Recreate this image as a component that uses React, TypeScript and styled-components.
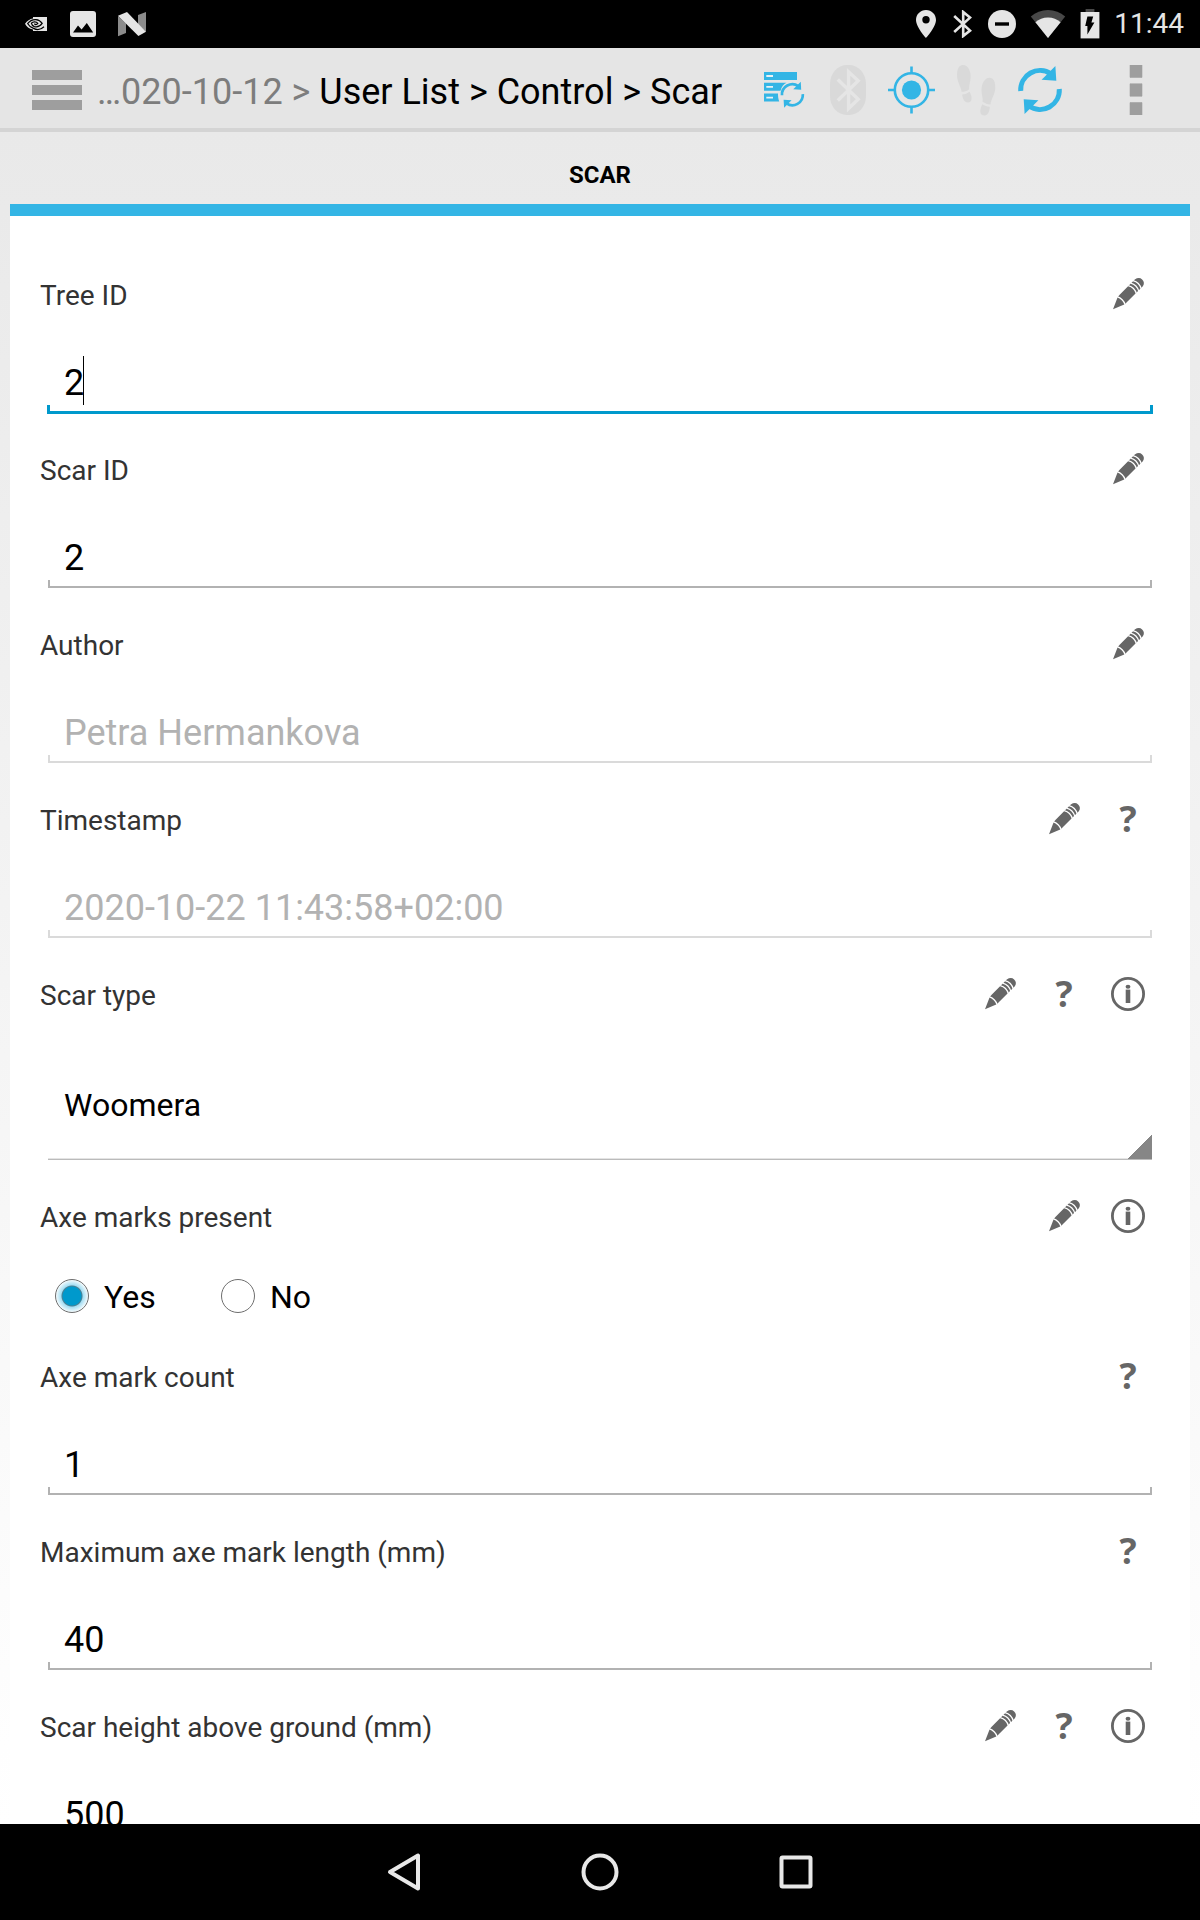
import React from "react";
import styled, { createGlobalStyle, css } from "styled-components";

const blue = "#33b5e5";
const focusBlue = "#0099cc";
const statusInk = "#e5e5e5";
const iconInk = "#666666";

const GlobalStyle = createGlobalStyle`
  *, *::before, *::after { box-sizing: border-box; }
  body { margin: 0; background: #000; font-family: Roboto, "Noto Sans", sans-serif; }
  button, input, select { font-family: inherit; margin: 0; }
`;

const Screen = styled.div`
  display: flex;
  flex-direction: column;
  height: 100vh;
  overflow: hidden;
  color: #000;
`;

/* ---------- Status bar ---------- */

const StatusBar = styled.div`
  display: flex;
  flex: none;
  align-items: center;
  justify-content: space-between;
  height: 48px;
  padding: 0 16px 0 24px;
  background: #000;
`;

const StatusGroup = styled.div<{ $gap: number }>`
  display: flex;
  align-items: center;
  gap: ${(p) => p.$gap}px;
`;

const Clock = styled.time`
  color: ${statusInk};
  font-size: 28px;
  line-height: 48px;
`;

/* ---------- App bar ---------- */

const AppBar = styled.header`
  display: flex;
  flex: none;
  align-items: center;
  height: 84px;
  padding-left: 32px;
  background: #e5e5e5;
  border-bottom: 4px solid #d4d4d4;
`;

const plainButton = css`
  display: flex;
  align-items: center;
  justify-content: center;
  padding: 0;
  border: 0;
  background: none;
`;

const MenuButton = styled.button`
  ${plainButton}
  flex: none;
  flex-direction: column;
  gap: 5px;
  width: 50px;
  height: 80px;
  padding-top: 4px;
`;

const MenuLine = styled.span`
  width: 50px;
  height: 10px;
  background: #9e9e9e;
`;

const Breadcrumb = styled.nav`
  flex: 1;
  min-width: 0;
  padding: 8px 0 0 15px;
  overflow: hidden;
  white-space: nowrap;
  font-size: 36px;
  line-height: 42px;
`;

const Crumb = styled.a<{ $muted?: boolean }>`
  color: ${(p) => (p.$muted ? "#7d7d7d" : "#000")};
  text-decoration: none;
`;

const Separator = styled.span<{ $muted?: boolean }>`
  color: ${(p) => (p.$muted ? "#7d7d7d" : "#000")};
`;

const Actions = styled.div`
  display: flex;
  flex: none;
  padding-top: 4px;
`;

const ToolButton = styled.button<{ $wide?: boolean }>`
  ${plainButton}
  width: ${(p) => (p.$wide ? 128 : 64)}px;
  height: 64px;
`;

/* ---------- Form ---------- */

const Content = styled.main`
  display: flex;
  flex: 1;
  flex-direction: column;
  min-height: 0;
  padding: 0 10px;
  overflow: hidden;
  background: linear-gradient(#e9e9e9, #ffffff);
`;

const Tabs = styled.div`
  display: flex;
  flex: none;
  height: 84px;
  border-bottom: 12px solid ${blue};
`;

const Tab = styled.button`
  ${plainButton}
  flex: 1;
  padding-top: 14px;
  color: #000;
  font-size: 24px;
  font-weight: 700;
  line-height: 28px;
`;

const Form = styled.form`
  flex: 1;
  min-height: 0;
  padding: 46px 30px 0;
  overflow: hidden;
  background: #fff;
`;

const FieldBlock = styled.div`
  display: flex;
  flex-direction: column;
`;

const FieldHeader = styled.div`
  display: flex;
  align-items: center;
  height: 64px;
`;

const FieldLabel = styled.label`
  flex: 1;
  padding-top: 4px;
  color: #333;
  font-size: 28px;
  line-height: 34px;
`;

const HelpButton = styled.button`
  ${plainButton}
  width: 64px;
  height: 64px;
  color: ${iconInk};
  font-family: "Open Sans", "Noto Sans", sans-serif;
  font-size: 36px;
  font-weight: 700;
  line-height: 48px;
`;

type LineState = "normal" | "focused" | "disabled";

const lineColor = { normal: "#b2b2b2", focused: focusBlue, disabled: "#dadada" };

const InputFrame = styled.div<{ $state: LineState }>`
  position: relative;
  height: 60px;
  margin: 27px 8px 24px;

  &::after {
    content: "";
    position: absolute;
    inset: ${(p) => (p.$state === "focused" ? "auto -1px -1px" : "auto 0 0")};
    height: ${(p) => (p.$state === "focused" ? 9 : 8)}px;
    border: solid ${(p) => lineColor[p.$state]};
    border-width: ${(p) => (p.$state === "focused" ? "0 3px 3px" : "0 2px 2px")};
    pointer-events: none;
  }
`;

const TextInput = styled.input`
  display: block;
  width: 100%;
  height: 60px;
  padding: 0 16px;
  border: 0;
  outline: 0;
  background: transparent;
  color: #000;
  font-size: 36px;
  line-height: 42px;

  &:disabled {
    color: #b2b2b2;
  }
`;

const Caret = styled.span`
  position: absolute;
  top: 3px;
  left: 35px;
  width: 1px;
  height: 49px;
  background: #000;
`;

const SelectFrame = styled.div`
  position: relative;
  margin: 24px 8px;

  &::after {
    content: "";
    position: absolute;
    right: 0;
    bottom: 1px;
    width: 24px;
    height: 24px;
    background: linear-gradient(135deg, transparent 50%, #868686 50%);
    pointer-events: none;
  }
`;

const Select = styled.select`
  display: block;
  width: 100%;
  height: 110px;
  padding: 0 16px;
  appearance: none;
  border: 0;
  border-bottom: 1px solid #bbb;
  border-radius: 0;
  outline: 0;
  background: transparent;
  box-shadow: inset 0 -1px #e4e4e4;
  color: #000;
  font-size: 32px;
`;

const RadioRow = styled.div`
  display: flex;
  align-items: center;
  height: 96px;
  padding-left: 15px;
`;

const RadioOption = styled.label`
  display: flex;
  align-items: center;
  gap: 15px;
  min-width: 166px;
  font-size: 32px;
  line-height: 38px;
`;

const RadioText = styled.span`
  padding-top: 2px;
`;

const Radio = styled.input`
  flex: none;
  width: 34px;
  height: 34px;
  appearance: none;
  border: 1px solid #6e6e6e;
  border-radius: 50%;

  &:checked {
    background: radial-gradient(
      circle,
      #0099cc 9px,
      #4d7f91 10px,
      #a5def3 11px,
      #e4f5fb 15px,
      #f4fbfd 16px
    );
  }
`;

/* ---------- Navigation bar ---------- */

const SystemNav = styled.nav`
  display: flex;
  flex: none;
  justify-content: center;
  height: 96px;
  background: #000;
`;

const SystemButton = styled.button`
  ${plainButton}
  width: 196px;
`;

/* ---------- Icons ---------- */

const SyncArrows = () => (
  <g>
    <path d="M12.7 33A19.3 19.3 0 0 1 43 16" fill="none" stroke={blue} strokeWidth="5" />
    <path d="M47.4 8L48.3 22.7L33.6 21.7Z" fill={blue} />
    <path d="M51.3 31A19.3 19.3 0 0 1 21 48" fill="none" stroke={blue} strokeWidth="5" />
    <path d="M16.6 56L15.7 41.3L30.4 42.3Z" fill={blue} />
  </g>
);

const SyncIcon = () => (
  <svg width="64" height="64" viewBox="0 0 64 64"><SyncArrows /></svg>
);

const ServerSyncIcon = () => (
  <svg width="64" height="64" viewBox="0 0 64 64">
    <path d="M12 14H45V22H12ZM12 24.7H34.5C31.5 26 29.5 28.8 28.5 32.7H12ZM12 35.6H26C26 38.6 26.3 41 27.2 43.5H12Z" fill={blue} />
    <path d="M14.3 18H21M14.3 28.9H21M14.3 39.7H21" stroke="#e9f2f5" strokeWidth="1.8" />
    <g transform="translate(40.4 36.7) scale(.54) translate(-32 -32)"><SyncArrows /></g>
  </svg>
);

const BluetoothBadgeIcon = () => (
  <svg width="64" height="64" viewBox="0 0 64 64">
    <rect x="14" y="7" width="36" height="50" rx="17" ry="19" fill="#d9d9d9" />
    <path d="M21.8 21.5L42.2 41.3L32.6 50.5V13.8L42.2 22.8L21.8 42.5" fill="none" stroke="#e5e5e5" strokeWidth="3.4" />
  </svg>
);

const TargetIcon = () => (
  <svg width="64" height="64" viewBox="0 0 64 64">
    <circle cx="31.5" cy="32" r="9.6" fill={blue} />
    <circle cx="31.5" cy="32" r="16.7" fill="none" stroke={blue} strokeWidth="2.6" />
    <path d="M31.5 8.5V15.5M31.5 48.5V55.5M8 32H15M48 32H55" stroke={blue} strokeWidth="2.6" />
  </svg>
);

const FootprintsIcon = () => (
  <svg width="64" height="64" viewBox="0 0 64 64" fill="#d9d9d9">
    <path d="M19 7C24 7 27 13 26.6 19.5C26.4 24 24.8 27 25.2 31.2C23 33 20.4 33.8 17.6 33.8C17 28.5 13 24 13 17C13 11 15 7 19 7Z" />
    <path d="M18.2 36.6C21 36.4 23.4 35.4 25.6 33.8C26.6 36 27.6 38 27.6 40.4C27.6 43 26 44.4 23.8 44.4C20.2 44.4 18.6 40.8 18.2 36.6Z" />
    <path d="M45.6 19.8C49.6 19.8 51.4 24 51.3 29.6C51.2 36.4 47.4 40.6 46.4 46.4C43.6 46.4 41 45.4 38.6 43.8C39.2 39.6 37.4 36.6 37.5 32C37.7 25.6 40.6 19.8 45.6 19.8Z" />
    <path d="M38.2 46.2C40.6 47.8 43 48.6 45.8 48.8C45.6 53.6 44 57.4 40.6 57.4C38 57.4 36.3 55.8 36.3 53.4C36.3 50.8 37.4 48.8 38.2 46.2Z" />
  </svg>
);

const OverflowIcon = () => (
  <svg width="14" height="50" viewBox="0 0 14 50" fill="#9e9e9e">
    <path d="M1 0H13V12.4H1ZM1 18.8H13V31.2H1ZM1 37.6H13V50H1Z" stroke="#9e9e9e" strokeWidth=".6" />
  </svg>
);

const PencilIcon = () => (
  <svg width="64" height="64" viewBox="0 0 64 64">
    <g transform="translate(17 47.3) rotate(-45)">
      <path d="M0 0L12 -5.3Q14 -5.6 15 -5.6H36.4Q41.6 -4.6 41.6 -.4Q41.6 4 37.4 4.8H15Q13 5 12 4.7Z" fill={iconInk} />
      <path d="M11.8 -6Q14.6 -0.3 11.8 5.6M27.6 -6Q30.8 -0.3 27.6 5.6M31 -6Q34.2 -0.3 31 5.6M34.4 -6Q37.6 -0.3 34.4 5.6" fill="none" stroke="#fff" strokeWidth="1.3" />
    </g>
  </svg>
);

const InfoIcon = () => (
  <svg width="64" height="64" viewBox="0 0 64 64">
    <circle cx="32" cy="32" r="15.6" fill="none" stroke={iconInk} strokeWidth="2.8" />
    <ellipse cx="32" cy="24.8" rx="2.4" ry="2" fill={iconInk} />
    <path d="M32 27.6V41" stroke={iconInk} strokeWidth="4.6" />
  </svg>
);

const NvidiaIcon = () => (
  <svg width="24" height="28" viewBox="0 0 24 28">
    <path d="M9 7H23V21H9V19.6C5 19 2.5 16.6 1 13.8C3 10.6 6 8.8 9 8.4Z" fill={statusInk} />
    <path d="M20 16.8C17 19.6 12.6 20 9.5 18.4C6.6 17.2 4.6 15.6 3.6 13.6C6 10.4 9 9.4 12 9.6C15 9.8 17 11.6 18.2 13.4C15.4 17 12.6 17.4 10.4 16.6C8.4 15.8 7.6 14.6 7.4 13.2C9 11.2 12.4 11.4 13.8 13.4C12.6 15 11.2 15 10.4 13.6" fill="none" stroke="#000" strokeWidth="1.2" />
  </svg>
);

const PictureIcon = () => (
  <svg width="26" height="28" viewBox="0 0 26 28">
    <rect y="1" width="26" height="26" rx="3" fill={statusInk} />
    <path d="M3 22.5L8 15.5L11.6 19.6L16.8 13L23.2 22.5Z" />
  </svg>
);

const NougatIcon = () => (
  <svg width="28" height="28" viewBox="0 0 28 28">
    <path d="M0 6L8 13.4V23L0 26.2ZM20 5L28 2V21.8L20 14.4Z" fill="#8b8b8b" />
    <path d="M0 5.8L9 2L28 21.8L20.4 26Z" fill={statusInk} />
  </svg>
);

const PinIcon = () => (
  <svg width="20" height="28" viewBox="0 0 20 28">
    <path d="M10 0C4.4 0 0 4.4 0 10C0 17 10 28 10 28C10 28 20 17 20 10C20 4.4 15.6 0 10 0ZM10 6A3.7 3.7 0 1 1 10 13.4A3.7 3.7 0 1 1 10 6Z" fill={statusInk} fillRule="evenodd" />
  </svg>
);

const BluetoothIcon = () => (
  <svg width="24" height="28" viewBox="0 0 24 28">
    <path d="M4.2 6L20 20.6L13.2 26V2L20 7.6L4.2 22" fill="none" stroke={statusInk} strokeWidth="2.6" />
  </svg>
);

const DoNotDisturbIcon = () => (
  <svg width="28" height="28" viewBox="0 0 28 28">
    <circle cx="14" cy="14" r="14" fill={statusInk} />
    <path d="M7 14H21" stroke="#000" strokeWidth="3.4" />
  </svg>
);

const WifiIcon = () => (
  <svg width="36" height="28" viewBox="0 0 36 28">
    <path d="M18 28L.8 6.4C5.6 2.4 11.4 0 18 0S30.4 2.4 35.2 6.4Z" fill="#484848" />
    <path d="M18 28L5.4 12.2C9 9 13 7.4 18 7.4S27 9 30.6 12.2Z" fill={statusInk} />
  </svg>
);

const BatteryIcon = () => (
  <svg width="20" height="30" viewBox="0 0 20 30">
    <path d="M5.6 0H14.4V4H5.6Z" fill="#484848" />
    <path d="M.6 3H19.4V29.4H.6Z" fill={statusInk} />
    <path d="M7.4 7.6H13.2L11.4 13.6H14.4L7.4 25.4V17H5.2Z" />
  </svg>
);

const BackIcon = () => (
  <svg width="40" height="40" viewBox="0 0 40 40">
    <path d="M34 3.5V36.5L6 20Z" fill="none" stroke="#e8e8e8" strokeWidth="4" strokeLinejoin="round" />
  </svg>
);

const HomeIcon = () => (
  <svg width="40" height="40" viewBox="0 0 40 40">
    <circle cx="20" cy="20" r="16.5" fill="none" stroke="#e8e8e8" strokeWidth="4" />
  </svg>
);

const RecentsIcon = () => (
  <svg width="40" height="40" viewBox="0 0 40 40">
    <rect x="5.5" y="5.5" width="29" height="29" rx="1" fill="none" stroke="#e8e8e8" strokeWidth="4" />
  </svg>
);

/* ---------- Composition ---------- */

type FieldAction = "edit" | "help" | "info";

function Header({ id, label, actions }: { id: string; label: string; actions: FieldAction[] }) {
  return (
    <FieldHeader>
      <FieldLabel htmlFor={id}>{label}</FieldLabel>
      {actions.map((action) => {
        if (action === "help") {
          return <HelpButton key={action} type="button" aria-label={`Help for ${label}`}>?</HelpButton>;
        }
        return (
          <ToolButton key={action} type="button" aria-label={`${action} ${label}`}>
            {action === "edit" ? <PencilIcon /> : <InfoIcon />}
          </ToolButton>
        );
      })}
    </FieldHeader>
  );
}

interface TextFieldProps {
  id: string;
  label: string;
  value: string;
  actions: FieldAction[];
  state?: LineState;
}

function TextField({ id, label, value, actions, state = "normal" }: TextFieldProps) {
  return (
    <FieldBlock>
      <Header id={id} label={label} actions={actions} />
      <InputFrame $state={state}>
        <TextInput id={id} type="text" defaultValue={value} disabled={state === "disabled"} />
        {state === "focused" && <Caret />}
      </InputFrame>
    </FieldBlock>
  );
}

export default function App() {
  return (
    <Screen>
      <GlobalStyle />
      <StatusBar>
        <StatusGroup $gap={22}>
          <NvidiaIcon />
          <PictureIcon />
          <NougatIcon />
        </StatusGroup>
        <StatusGroup $gap={14}>
          <PinIcon />
          <BluetoothIcon />
          <DoNotDisturbIcon />
          <WifiIcon />
          <BatteryIcon />
          <Clock>11:44</Clock>
        </StatusGroup>
      </StatusBar>

      <AppBar>
        <MenuButton type="button" aria-label="Menu">
          <MenuLine />
          <MenuLine />
          <MenuLine />
        </MenuButton>
        <Breadcrumb aria-label="Breadcrumb">
          <Crumb href="#module" $muted>…020-10-12</Crumb>
          <Separator $muted> &gt; </Separator>
          <Crumb href="#users">User List</Crumb>
          <Separator> &gt; </Separator>
          <Crumb href="#control">Control</Crumb>
          <Separator> &gt; </Separator>
          <Crumb href="#scar">Scar</Crumb>
        </Breadcrumb>
        <Actions>
          <ToolButton type="button" aria-label="Server sync"><ServerSyncIcon /></ToolButton>
          <ToolButton type="button" aria-label="Bluetooth"><BluetoothBadgeIcon /></ToolButton>
          <ToolButton type="button" aria-label="Location"><TargetIcon /></ToolButton>
          <ToolButton type="button" aria-label="Track log"><FootprintsIcon /></ToolButton>
          <ToolButton type="button" aria-label="Sync"><SyncIcon /></ToolButton>
          <ToolButton type="button" aria-label="More options" $wide><OverflowIcon /></ToolButton>
        </Actions>
      </AppBar>

      <Content>
        <Tabs role="tablist">
          <Tab type="button" role="tab" aria-selected="true">SCAR</Tab>
        </Tabs>
        <Form>
          <TextField id="tree-id" label="Tree ID" value="2" actions={["edit"]} state="focused" />
          <TextField id="scar-id" label="Scar ID" value="2" actions={["edit"]} />
          <TextField id="author" label="Author" value="Petra Hermankova" actions={["edit"]} state="disabled" />
          <TextField
            id="timestamp"
            label="Timestamp"
            value="2020-10-22 11:43:58+02:00"
            actions={["edit", "help"]}
            state="disabled"
          />
          <FieldBlock>
            <Header id="scar-type" label="Scar type" actions={["edit", "help", "info"]} />
            <SelectFrame>
              <Select id="scar-type" defaultValue="Woomera">
                <option>Woomera</option>
              </Select>
            </SelectFrame>
          </FieldBlock>
          <FieldBlock>
            <Header id="axe-yes" label="Axe marks present" actions={["edit", "info"]} />
            <RadioRow role="radiogroup" aria-label="Axe marks present">
              <RadioOption>
                <Radio id="axe-yes" type="radio" name="axe" value="yes" defaultChecked />
                <RadioText>Yes</RadioText>
              </RadioOption>
              <RadioOption>
                <Radio type="radio" name="axe" value="no" />
                <RadioText>No</RadioText>
              </RadioOption>
            </RadioRow>
          </FieldBlock>
          <TextField id="axe-count" label="Axe mark count" value="1" actions={["help"]} />
          <TextField id="axe-length" label="Maximum axe mark length (mm)" value="40" actions={["help"]} />
          <TextField
            id="scar-height"
            label="Scar height above ground (mm)"
            value="500"
            actions={["edit", "help", "info"]}
          />
        </Form>
      </Content>

      <SystemNav aria-label="System">
        <SystemButton type="button" aria-label="Back"><BackIcon /></SystemButton>
        <SystemButton type="button" aria-label="Home"><HomeIcon /></SystemButton>
        <SystemButton type="button" aria-label="Recent apps"><RecentsIcon /></SystemButton>
      </SystemNav>
    </Screen>
  );
}
